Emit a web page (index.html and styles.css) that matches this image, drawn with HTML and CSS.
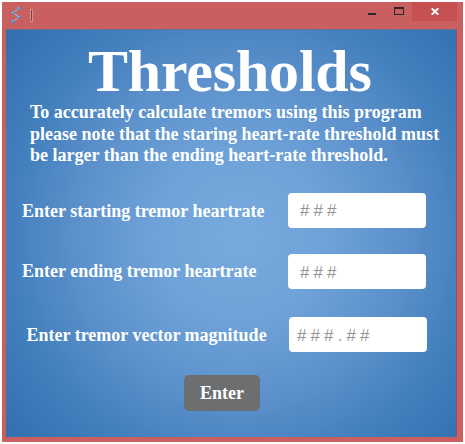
FILE: index.html
```
<!DOCTYPE html>
<html lang="en">
<head>
<meta charset="utf-8">
<title>Thresholds</title>
<link rel="stylesheet" href="styles.css">
</head>
<body>
<div class="window">
  <header class="titlebar">
    <svg class="app-icon" width="12" height="18" viewBox="0 0 12 18">
      <path d="M9 2.500L3 6.500L9 11L3 15.500" fill="none" stroke="#c9a3ad" stroke-width="1.300"/>
      <g fill="#4d86c6">
        <circle cx="9" cy="2.500" r="1.900"/><circle cx="3" cy="6.700" r="1.900"/>
        <circle cx="9" cy="11" r="1.900"/><circle cx="3" cy="15.500" r="1.900"/>
      </g>
      <g fill="#c3daf0">
        <circle cx="8.600" cy="2" r=".8"/><circle cx="2.600" cy="6.200" r=".8"/>
        <circle cx="8.600" cy="10.500" r=".8"/><circle cx="2.600" cy="15" r=".8"/>
      </g>
    </svg>
    <span class="caret"></span>
    <svg class="controls" width="36" height="18" viewBox="0 0 36 18">
      <path d="M0 11h8v2H0z" fill="#28282b"/>
      <path d="M26 5h10v8H26zM27 7v5h8V7z" fill="#28282b" fill-rule="evenodd"/>
    </svg>
    <span class="close">
      <svg width="8" height="7" viewBox="0 0 8 7"><path d="M.7 .3L7.300 6.700M7.300 .3L.7 6.700" stroke="#fff" stroke-width="1.900"/></svg>
    </span>
  </header>
  <main class="client">
    <h1 class="title">Thresholds</h1>
    <p class="note">To accurately calculate tremors using this program<br>please note that the staring heart-rate threshold must<br>be larger than the ending heart-rate threshold.</p>
    <form class="form">
      <div class="row start">
        <label for="start">Enter starting tremor heartrate</label>
        <input id="start" placeholder="###">
      </div>
      <div class="row end">
        <label for="end">Enter ending tremor heartrate</label>
        <input id="end" placeholder="###">
      </div>
      <div class="row magnitude">
        <label for="mag">Enter tremor vector magnitude</label>
        <input id="mag" placeholder="###.##">
      </div>
      <button class="enter" type="button">Enter</button>
    </form>
  </main>
</div>
</body>
</html>
```
FILE: styles.css
```
* { box-sizing: border-box; }
body {
  margin: 0;
  padding: 2px;
  background: #fff;
  font-family: "Liberation Serif", serif;
  font-weight: bold;
  color: #fff;
  overflow: hidden;
}
.window {
  width: 461px;
  height: 440px;
  background: #ca5f60;
  display: flex;
  flex-direction: column;
}
.titlebar {
  height: 27px;
  display: flex;
  align-items: flex-start;
}
.app-icon { margin: 4px 0 0 8px; }
.caret {
  width: 3px;
  height: 13px;
  margin: 7px 0 0 8px;
  background: #7d4048;
  border: 1px solid #d58f8f;
}
.controls { margin: 0 8px 0 auto; }
.close {
  width: 45px;
  height: 19px;
  margin-right: 6px;
  background: #c75050;
  display: flex;
  align-items: center;
  justify-content: center;
}
.client {
  width: 451px;
  height: 408px;
  margin-left: 4px;
  border-top: 1px solid #6d6c96;
  border-right: 1px solid #8d5263;
  background: radial-gradient(circle at 234px 206px, #78aadd 0, #6fa2d8 85px, #5b90cb 165px, #427fbd 232px, #3370b0 305px);
}
.title {
  margin: 11px 0 0 82px;
  font-size: 60px;
  line-height: 60px;
  letter-spacing: -0.2px;
  white-space: nowrap;
}
.note {
  margin: 1px 0 0 24px;
  font-size: 18px;
  line-height: 21.5px;
  white-space: nowrap;
}
.row { display: flex; align-items: center; height: 35px; }
.start { margin: 26px 0 0 16px; }
.end { margin: 26px 0 0 16px; }
.magnitude { margin: 28px 0 0 20.5px; }
label {
  font-size: 18px;
  width: 266px;
  white-space: nowrap;
}
.start label, .magnitude label { padding-top: 2px; }
.magnitude label { width: 262.5px; }
input {
  width: 138px;
  height: 35px;
  padding: 1px 0 0 12px;
  border: 0;
  border-radius: 4px;
  background: #fff;
  font: 17px "Liberation Sans", sans-serif;
  letter-spacing: 4.1px;
}
.magnitude input { padding: 4px 0 0 8px; }
#end { padding-top: 3px; }
input::placeholder { color: #949494; opacity: 1; }
.enter {
  display: block;
  width: 76px;
  height: 36px;
  margin: 23px 0 0 178px;
  padding: 2px 0 0;
  border: 0;
  border-radius: 5px;
  background: #6c6e70;
  color: #fff;
  font: bold 18px "Liberation Serif", serif;
}
```
